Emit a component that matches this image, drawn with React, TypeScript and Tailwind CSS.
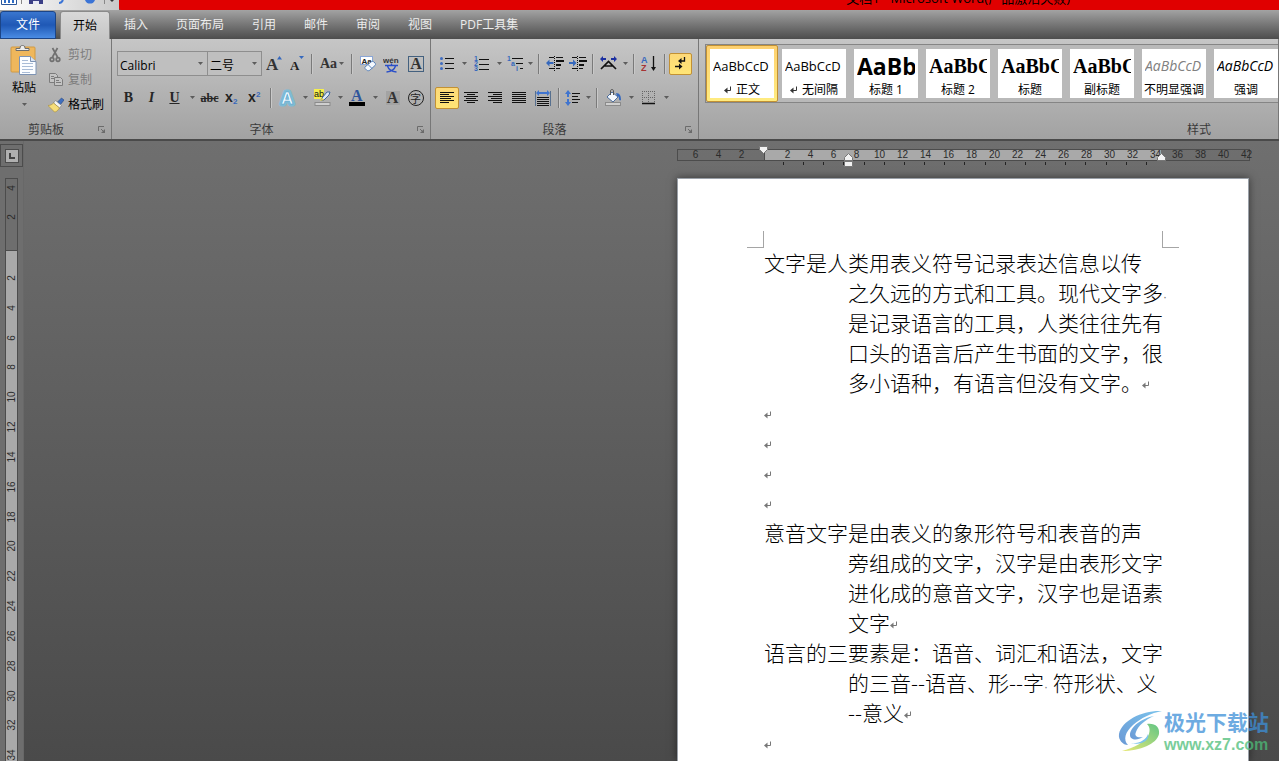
import type { ReactNode } from "react";
import clsx from "clsx";

const uiFont = "font-['Open_Sans','Noto_Sans_CJK_SC',sans-serif]";

const tabs = ["插入", "页面布局", "引用", "邮件", "审阅", "视图", "PDF工具集"];

const styleCards = [
  { label: "正文", mark: true, active: true, preview: "AaBbCcD", look: "text-[13px]" },
  { label: "无间隔", mark: true, preview: "AaBbCcD", look: "text-[13px]" },
  { label: "标题 1", preview: "AaBb", look: "text-[23px] font-bold" },
  { label: "标题 2", preview: "AaBbC", look: "text-xl font-bold font-['Liberation_Serif',serif]" },
  { label: "标题", preview: "AaBbC", look: "text-xl font-bold font-['Liberation_Serif',serif]" },
  { label: "副标题", preview: "AaBbC", look: "text-xl font-bold font-['Liberation_Serif',serif]" },
  { label: "不明显强调", preview: "AaBbCcD", look: "text-sm italic text-[#808080]" },
  { label: "强调", preview: "AaBbCcD", look: "text-sm italic" },
];

const paragraphs = [
  [
    "文字是人类用表义符号记录表达信息以传",
    "之久远的方式和工具。现代文字多·",
    "是记录语言的工具，人类往往先有",
    "口头的语言后产生书面的文字，很",
    "多小语种，有语言但没有文字。",
  ],
  [""],
  [""],
  [""],
  [""],
  [
    "意音文字是由表义的象形符号和表音的声",
    "旁组成的文字，汉字是由表形文字",
    "进化成的意音文字，汉字也是语素",
    "文字",
  ],
  ["语言的三要素是：语音、词汇和语法，文字", "的三音--语音、形--字· 符形状、义", "--意义"],
  [""],
];

const evens = (from: number, to: number) => {
  const list: number[] = [];
  for (let n = from; n <= to; n += 2) list.push(n);
  return list;
};

function ReturnMark({ className = "" }: { className?: string }) {
  return (
    <svg width="8" height="8" viewBox="0 0 8 8" className={clsx("inline-block shrink-0", className)} fill="none" stroke="currentColor">
      <path d="M6.5 0.5v4H1" />
      <path d="M3.5 1.5v6L0 4.5z" fill="currentColor" stroke="none" />
    </svg>
  );
}

function Caret() {
  return (
    <svg width="5" height="3" viewBox="0 0 5 3" className="shrink-0">
      <path d="M0 0h5L2.5 3z" fill="#5c5c5c" />
    </svg>
  );
}

function Tool({
  label,
  active,
  className = "w-[23px]",
  children,
}: {
  label: string;
  active?: boolean;
  className?: string;
  children: ReactNode;
}) {
  return (
    <button
      aria-label={label}
      title={label}
      className={clsx(
        "flex h-[22px] shrink-0 items-center justify-center rounded-[2px] text-[#262626]",
        active && "border border-[#c29134] bg-linear-to-b from-[#fdd978] to-[#ffe575]",
        className
      )}
    >
      {children}
    </button>
  );
}

function Drop({ label, className = "w-3" }: { label: string; className?: string }) {
  return (
    <button aria-label={label} className={clsx("flex h-[22px] shrink-0 items-center justify-center", className)}>
      <Caret />
    </button>
  );
}

function Sep() {
  return <span className="mx-[3px] h-5 w-[2px] shrink-0 border-r border-l border-r-[#c9c9c9] border-l-[#7a7a7a]" />;
}

function Group({
  label,
  className = "",
  launcher,
  footer = "justify-center pr-6",
  children,
}: {
  label: string;
  className?: string;
  launcher?: boolean;
  footer?: string;
  children: ReactNode;
}) {
  return (
    <section className={clsx("flex flex-col border-r border-[#777]", className)}>
      <div className="flex-1">{children}</div>
      <footer className={clsx("relative flex h-[19px] items-center text-xs text-[#3a3a3a]", footer)}>
        {label}
        {launcher && (
          <button aria-label={label + "选项"} className="absolute right-1.5 bottom-1.5">
            <svg width="7" height="7" viewBox="0 0 7 7" fill="none" stroke="#6b6b6b">
              <path d="M0.5 5V0.5H6M3 3l2.5 2.5" />
              <path d="M7 3v4H3z" fill="#6b6b6b" stroke="none" />
            </svg>
          </button>
        )}
      </footer>
    </section>
  );
}

function Combo({ label, value, className }: { label: string; value: string; className: string }) {
  return (
    <div className={clsx("relative h-[25px] border border-[#8e8e8e] bg-[#bfbfbf]", className)}>
      <select aria-label={label} className="h-full w-full appearance-none pb-1 pl-0.5 text-xs text-black">
        <option>{value}</option>
      </select>
      <span className="pointer-events-none absolute top-2.5 right-1 flex">
        <Caret />
      </span>
    </div>
  );
}

// rows of [x1, x2] text strokes, two pixels apart
function Lines({ rows }: { rows: number[][] }) {
  return (
    <svg width="16" height="13" viewBox="0 0 16 13" shapeRendering="crispEdges">
      {rows.map(([a, b], i) => (
        <path key={i} d={`M${a} ${i * 2 + 1.5}H${b}`} stroke="#111" />
      ))}
    </svg>
  );
}

function Indent({ flip }: { flip?: boolean }) {
  return (
    <svg width="18" height="15" viewBox="0 0 18 15" shapeRendering="crispEdges">
      <path d="M3 1.5h5M10 1.5h7M3 12.5h5M10 12.5h4" stroke="#111" />
      <path d="M10 5h8M10 9h5" stroke="#111" strokeWidth="2" />
      <path d="M8.5 0v15" stroke="#111" strokeDasharray="1 1" />
      <path
        d={flip ? "M7.500 7L4 3.500V6H0v2h4v2.500z" : "M0 7l3.500-3.500V6H7.500v2h-4v2.500z"}
        fill="#3568bd"
        shapeRendering="auto"
      />
    </svg>
  );
}

function ClipboardGroup() {
  return (
    <Group label="剪贴板" launcher className="w-[112px] shrink-0" footer="pl-7">
      <div className="flex">
        <button className="flex w-12 flex-col items-center pt-1.5 text-xs text-black">
          <svg width="28" height="31" viewBox="0 0 28 31">
            <rect x="1" y="2" width="24" height="25" rx="1" fill="#efb75c" stroke="#d19a43" />
            <path d="M6 5.500V3.500h4C10 1 11 .5 12.500.5S15 1 15 3.500h4v2z" fill="#eee" stroke="#6d6d6d" />
            <path d="M9.500 11.500h11l5.500 5v13H9.500z" fill="#fbfdff" stroke="#7d93b3" />
            <path d="M20.500 11.500v5H26" fill="#dbe6f4" stroke="#7d93b3" />
            <path d="M12 15.500h6M12 18.500h11M12 21.500h11M12 24.500h11M12 27.500h8" stroke="#a9bcd6" />
          </svg>
          <span className="mt-1 leading-4">粘贴</span>
          <span className="flex h-4 items-center">
            <Caret />
          </span>
        </button>
        <div className="flex flex-col pt-[3px] text-xs">
          <button className="flex h-[25px] items-center gap-1 text-[#7c7c7c]">
            <svg width="16" height="16" viewBox="0 0 16 16" fill="none" stroke="#707070" strokeWidth="1.700">
              <path d="M4.500 1l5 9M9.500 1l-5 9" />
              <circle cx="4" cy="12.500" r="1.800" />
              <circle cx="10" cy="12.500" r="1.800" />
            </svg>
            剪切
          </button>
          <button className="flex h-[25px] items-center gap-1 text-[#7c7c7c]">
            <svg width="16" height="16" viewBox="0 0 16 16" fill="#c4c4c4" stroke="#7c7c7c">
              <path d="M1.500 1.500h6l2 2v7h-8z" />
              <path d="M6.500 5.500h6l2 2v6h-8z" />
              <path d="M3 4.500h3M3 6.500h3M8 8.500h3M8 10.500h5" />
            </svg>
            复制
          </button>
          <button className="flex h-[25px] items-center gap-1 text-black">
            <svg width="16" height="16" viewBox="0 0 16 16">
              <path d="M9.500 5l4-4 2.500 2-3.500 4.500z" fill="#3f6fbf" stroke="#27477f" strokeWidth=".6" />
              <path d="M7.500 3.500l6 5-2 2.500-6-5z" fill="#f3f3f3" stroke="#777" strokeWidth=".6" />
              <path d="M5.500 6l6 5c-2 3-3.500 4-5 4L0 8.500c2.500 0 4-1 5.500-2.500z" fill="#f6dd79" stroke="#a58a35" strokeWidth=".6" />
            </svg>
            格式刷
          </button>
        </div>
      </div>
    </Group>
  );
}

function FontGroup() {
  return (
    <Group label="字体" launcher className="w-[319px] shrink-0 pl-[5px]">
      <div className="mt-3 flex h-[25px] items-center">
        <Combo label="字体" value="Calibri" className="w-[91px]" />
        <Combo label="字号" value="二号" className="-ml-px w-[55px]" />
        <Tool label="增大字体">
          <svg width="16" height="20" viewBox="0 0 16 20">
            <text x="0" y="16" fontSize="17" fontWeight="bold" fontFamily="Liberation Serif" fill="#333">A</text>
            <path d="M11 5.500h5L13.500 2z" fill="#3568bd" />
          </svg>
        </Tool>
        <Tool label="缩小字体">
          <svg width="14" height="20" viewBox="0 0 14 20">
            <text x="0" y="16" fontSize="13" fontWeight="bold" fontFamily="Liberation Serif" fill="#222">A</text>
            <path d="M9 2h5l-2.500 3z" fill="#3568bd" />
          </svg>
        </Tool>
        <Sep />
        <Tool label="更改大小写" className="w-8 gap-0.5">
          <span className="font-['Liberation_Serif',serif] text-sm font-bold text-[#333]">Aa</span>
          <Caret />
        </Tool>
        <Sep />
        <Tool label="清除格式" className="w-6">
          <svg width="17" height="18" viewBox="0 0 17 18">
            <rect x="0.500" y="1.500" width="12" height="8" fill="#fff" stroke="#8aa6d6" />
            <text x="1.500" y="8.500" fontSize="8" fontWeight="bold" fontFamily="Liberation Sans" fill="#222">Aa</text>
            <path d="M5 12l6-5c1-.8 2-.8 3 0l1 1c.8 1 .6 2 0 2.500l-5 4.500c-1 1-2.500 1-3.500 0l-1-1c-.8-.8-.8-1.500-.5-2z" fill="#f4f8fd" stroke="#5b84bb" />
            <path d="M8 9.500l4 4" stroke="#5b84bb" />
          </svg>
        </Tool>
        <Tool label="拼音指南" className="w-6">
          <svg width="18" height="18" viewBox="0 0 18 18">
            <text x="0" y="8" fontSize="8" fontFamily="Liberation Sans" fontWeight="bold" fill="#333">wén</text>
            <path d="M2 10.500h13M8.500 8.500v2M4.500 11c1 3.500 4 5.500 9 6M12.500 11c-1 3.500-4 5.500-9 6" fill="none" stroke="#2b50c8" strokeWidth="1.400" />
          </svg>
        </Tool>
        <Tool label="字符边框" className="w-6">
          <span className="flex h-4 w-4 items-center justify-center border border-[#44617f] font-['Liberation_Serif',serif] text-base leading-4 font-bold text-[#333]">
            A
          </span>
        </Tool>
      </div>
      <div className="mt-[9px] flex h-[25px] items-center font-['Liberation_Serif',serif]">
        <Tool label="加粗">
          <b className="text-sm">B</b>
        </Tool>
        <Tool label="倾斜">
          <b className="text-sm italic">I</b>
        </Tool>
        <Tool label="下划线">
          <b className="text-sm underline">U</b>
        </Tool>
        <Drop label="下划线样式" />
        <Tool label="删除线">
          <b className="text-xs line-through">abc</b>
        </Tool>
        <Tool label="下标">
          <svg width="15" height="18" viewBox="0 0 15 18">
            <text x="0" y="13" fontSize="14" fontWeight="bold" fontFamily="Liberation Sans" fill="#222">x</text>
            <text x="8" y="15" fontSize="8" fontWeight="bold" fontFamily="Liberation Sans" fill="#3568bd">2</text>
          </svg>
        </Tool>
        <Tool label="上标">
          <svg width="15" height="18" viewBox="0 0 15 18">
            <text x="0" y="13" fontSize="14" fontWeight="bold" fontFamily="Liberation Sans" fill="#222">x</text>
            <text x="8" y="8" fontSize="8" fontWeight="bold" fontFamily="Liberation Sans" fill="#3568bd">2</text>
          </svg>
        </Tool>
        <Sep />
        <Tool label="文本效果" className="w-6">
          <svg width="20" height="20" viewBox="0 0 20 20" fontFamily="Liberation Sans" fontSize="17" fontWeight="bold">
            <text x="4" y="16" fill="none" stroke="#6cc0e4" strokeWidth="5" strokeLinejoin="round" opacity=".7">A</text>
            <text x="4" y="16" fill="#f4fbff" stroke="#4ea3cf" strokeWidth=".6">A</text>
          </svg>
        </Tool>
        <Drop label="文本效果选项" />
        <Tool label="突出显示">
          <svg width="18" height="18" viewBox="0 0 18 18">
            <rect x="0" y="0" width="10" height="10" fill="#f5ef4d" />
            <text x="0" y="8" fontSize="9" fontFamily="Liberation Sans" fill="#111">ab</text>
            <path d="M8 9l5-6 3 0-1 3-5 5-2.500.5z" fill="#dce8f6" stroke="#43689e" />
            <path d="M6 12l2-3 2 2z" fill="#e8d13f" />
            <rect x="1" y="13.500" width="15" height="3" fill="#cfcfcf" stroke="#8b8b8b" />
          </svg>
        </Tool>
        <Drop label="突出显示颜色" />
        <Tool label="字体颜色">
          <svg width="17" height="20" viewBox="0 0 17 20">
            <text x="2" y="13" fontSize="16" fontWeight="bold" fontFamily="Liberation Serif" fill="#2f559c">A</text>
            <rect x="0" y="14" width="16" height="4" fill="#000" />
          </svg>
        </Tool>
        <Drop label="选择字体颜色" />
        <Tool label="字符底纹">
          <span className="flex h-[14px] w-[14px] items-center justify-center bg-[#a3a3a3] text-base leading-[14px] font-bold text-[#333]">A</span>
        </Tool>
        <Tool label="带圈字符">
          <span className="flex h-4 w-4 shrink-0 items-center justify-center rounded-full border border-[#222] font-['Noto_Sans_CJK_SC',sans-serif] text-[11px] leading-3">
            字
          </span>
        </Tool>
      </div>
    </Group>
  );
}

function ParagraphGroup() {
  return (
    <Group label="段落" launcher className="w-[268px] shrink-0 pl-1">
      <div className="mt-3 flex h-[25px] items-center">
        <Tool label="项目符号">
          <svg width="14" height="15" viewBox="0 0 14 15">
            <path d="M5 2.500h9M5 7.500h9M5 12.500h9" stroke="#111" />
            <g fill="#3f6cc0">
              <circle cx="1.500" cy="2.500" r="1.500" />
              <circle cx="1.500" cy="7.500" r="1.500" />
              <circle cx="1.500" cy="12.500" r="1.500" />
            </g>
          </svg>
        </Tool>
        <Drop label="项目符号库" />
        <Tool label="编号">
          <svg width="15" height="18" viewBox="0 0 15 18" fontSize="7" fontWeight="bold" fontFamily="Liberation Sans" fill="#3568bd">
            <path d="M5 4.500h10M5 9.500h10M5 14.500h10" stroke="#111" />
            <text x="0" y="6">1</text>
            <text x="0" y="11">2</text>
            <text x="0" y="16">3</text>
          </svg>
        </Tool>
        <Drop label="编号库" />
        <Tool label="多级列表" className="w-5">
          <svg width="17" height="18" viewBox="0 0 17 18" fontSize="7" fontWeight="bold" fontFamily="Liberation Sans" fill="#3568bd">
            <path d="M5 3.500h11M9 8.500h7M13 13.500h3" stroke="#111" />
            <text x="0" y="6">1</text>
            <text x="4" y="11">a</text>
            <text x="9" y="16">i</text>
          </svg>
        </Tool>
        <Drop label="多级列表库" className="w-2.5" />
        <Sep />
        <Tool label="减少缩进量">
          <Indent />
        </Tool>
        <Tool label="增加缩进量">
          <Indent flip />
        </Tool>
        <Sep />
        <Tool label="中文版式">
          <svg width="17" height="15" viewBox="0 0 17 15">
            <path d="M1 13L8.500 5.500 16 13M4.500 10h8" fill="none" stroke="#111" strokeWidth="1.700" />
            <path d="M0 3l3-3v2h3v2H3v2zM17 3l-3-3v2h-3v2h3v2z" fill="#1b2fa0" />
          </svg>
        </Tool>
        <Drop label="中文版式选项" className="w-2.5" />
        <Sep />
        <Tool label="排序">
          <svg width="17" height="20" viewBox="0 0 17 20" fontSize="9" fontWeight="bold" fontFamily="Liberation Sans">
            <text x="0" y="9" fill="#3568bd">A</text>
            <text x="0" y="17" fill="#a63333">Z</text>
            <path d="M12.500 2v12" stroke="#111" strokeWidth="1.300" />
            <path d="M10 13h5l-2.500 4z" fill="#111" />
          </svg>
        </Tool>
        <Sep />
        <Tool label="显示编辑标记" active>
          <svg width="13" height="15" viewBox="0 0 13 15" fill="none" stroke="#111">
            <path d="M10.500 1v4H6M1 10.500h5" strokeWidth="1.300" />
            <path d="M7.500 2v6L4 5zM5 7.500v6l3.500-3z" fill="#111" stroke="none" />
          </svg>
        </Tool>
      </div>
      <div className="mt-[9px] flex h-[25px] items-center">
        <Tool label="左对齐" active className="w-6">
          <Lines rows={[[1, 15], [1, 10], [1, 15], [1, 12], [1, 15], [1, 10]]} />
        </Tool>
        <Tool label="居中" className="w-6">
          <Lines rows={[[1, 15], [4, 12], [1, 15], [3, 13], [1, 15], [4, 12]]} />
        </Tool>
        <Tool label="右对齐" className="w-6">
          <Lines rows={[[1, 15], [6, 15], [1, 15], [4, 15], [1, 15], [6, 15]]} />
        </Tool>
        <Tool label="两端对齐" className="w-6">
          <Lines rows={[[1, 15], [1, 15], [1, 15], [1, 15], [1, 15], [1, 15]]} />
        </Tool>
        <Tool label="分散对齐" className="w-6">
          <svg width="16" height="16" viewBox="0 0 16 16">
            <path d="M.5 1v15M15.500 1v15" stroke="#57708f" />
            <path d="M2 7.500h12M2 9.500h12M2 11.500h12M2 13.500h12M2 15.500h12" stroke="#111" />
            <path d="M1 3l3-3v2h8V0l3 3-3 3V4H4v2z" fill="#3f74cf" />
          </svg>
        </Tool>
        <Sep />
        <Tool label="行距" className="w-5">
          <svg width="16" height="16" viewBox="0 0 16 16">
            <path d="M7 3.500h8M7 6.500h6M7 9.500h8M7 12.500h6" stroke="#111" />
            <path d="M3 0l3 4H4v3H2V4H0zM3 16l3-4H4V9H2v3H0z" fill="#3f74cf" />
          </svg>
        </Tool>
        <Drop label="行距选项" className="w-2.5" />
        <Sep />
        <Tool label="底纹" className="w-6">
          <svg width="17" height="17" viewBox="0 0 17 17">
            <path d="M7 3l6 5-5 5-6-5z" fill="#f4f8fd" stroke="#4d6d9c" />
            <path d="M5.500 6V2c0-2 3-2 3 0v4" fill="none" stroke="#555" />
            <path d="M11 4c4 0 5 3 5 7-1 1-2 0-2-1 0-2-.5-3-2-3z" fill="#3568bd" />
            <rect x="0.500" y="13.500" width="15" height="3" fill="#cfcfcf" stroke="#8b8b8b" />
          </svg>
        </Tool>
        <Drop label="底纹颜色" />
        <Tool label="边框">
          <svg width="14" height="14" viewBox="0 0 14 14" fill="none">
            <path d="M.5 0v13M6.500 0v13M12.500 0v13M0 .5h13M0 6.500h13" stroke="#666" strokeDasharray="1 1" />
            <path d="M0 12.500h13" stroke="#111" strokeWidth="1.500" />
          </svg>
        </Tool>
        <Drop label="边框选项" />
      </div>
    </Group>
  );
}

function StylesGroup() {
  return (
    <Group label="样式" className="min-w-0 flex-1 overflow-hidden pl-1.5" footer="justify-end pr-[67px]">
      <div className="mt-[5px] flex border border-r-0 border-[#858585] bg-[#b9b9b9]">
        {styleCards.map((card) => (
          <button
            key={card.label}
            className={clsx(
              "h-[57px] w-[72px] shrink-0 rounded-[2px] border p-[3px]",
              card.active ? "border-[#c29134] bg-linear-to-b from-[#fdd070] to-[#ffec80]" : "border-transparent"
            )}
          >
            <span className="flex h-full flex-col overflow-hidden bg-white px-[3px] text-black">
              <span className={clsx("flex h-[33px] shrink-0 items-center overflow-hidden leading-8", card.look)}>{card.preview}</span>
              <span className="-mx-[3px] flex h-4 shrink-0 items-center justify-center gap-1 text-xs leading-4 whitespace-nowrap">
                {card.mark && <ReturnMark className="text-[#333]" />}
                {card.label}
              </span>
            </span>
          </button>
        ))}
      </div>
    </Group>
  );
}

function QuickAccess() {
  return (
    <div className="w-[119px] shrink-0 bg-linear-to-r from-white to-[#c9c9c9]">
      <svg width="119" height="10" viewBox="0 0 119 10">
        <path d="M1.500 0v4.500h15V0" fill="#fff" stroke="#2b579a" />
        <path d="M5 0v3M9 0v3M13 0v3" stroke="#2f6cc4" strokeWidth="2" />
        <path d="M21.500 0v4M104.500 0v4" stroke="#888" />
        <path d="M29 0h14v4H29z" fill="#3b3f86" />
        <path d="M33 1h6v3h-6z" fill="#e6e8f5" />
        <path d="M63 0c-1 2-2 3-4 3" fill="none" stroke="#3b74d6" strokeWidth="2" />
        <path d="M85 0c1 3 3 3.500 5 3.500S94 3 95 0z" fill="#3b74d6" />
        <path d="M110 0h4l-2 2z" fill="#333" />
      </svg>
    </div>
  );
}

function RulerCells({ values }: { values: number[] }) {
  return (
    <>
      {values.map((n) => (
        <span key={n} className="w-[23px] shrink-0 text-center">
          {n}
        </span>
      ))}
    </>
  );
}

function HorizontalRuler() {
  return (
    <div className="relative -mr-px font-['Liberation_Sans',sans-serif] text-[10px] leading-[10px] text-[#2b2b2b]">
      <div className="flex h-3 border border-[#4c4c4c]">
        <div className="flex w-[87px] shrink-0 border-r border-[#4c4c4c] pl-1.5">
          <RulerCells values={[6, 4, 2]} />
        </div>
        <div className="flex w-[396px] shrink-0 bg-[#a9a9a9] pl-[11px]">
          <RulerCells values={evens(2, 34)} />
        </div>
        <div className="flex min-w-0 flex-1 pl-[5px]">
          <RulerCells values={evens(36, 42)} />
        </div>
      </div>
      <div className="mt-px ml-[106px] flex w-[364px] justify-between">
        {Array.from({ length: 19 }, (_, i) => (
          <span key={i} className="h-[3px] w-px bg-[#222]" />
        ))}
      </div>
      {/* indent handles */}
      <svg width="9" height="8" viewBox="0 0 9 8" className="absolute -top-[3px] left-[82px]">
        <path d="M.5.5h8v3l-4 4-4-4z" fill="#f2f2f2" stroke="#777" />
      </svg>
      <svg width="9" height="14" viewBox="0 0 9 14" className="absolute top-1 left-[167px]">
        <path d="M.5 7.500v-3l4-4 4 4v3zM.5 8.500h8v5h-8z" fill="#f2f2f2" stroke="#777" />
      </svg>
      <svg width="9" height="8" viewBox="0 0 9 8" className="absolute top-1 left-[480px]">
        <path d="M.5 7.500v-3l4-4 4 4v3z" fill="#f2f2f2" stroke="#777" />
      </svg>
    </div>
  );
}

function VerticalRuler() {
  return (
    <aside className="w-6 shrink-0 overflow-hidden border-r border-[#686868] bg-[#6e6e6e] font-['Liberation_Sans',sans-serif] text-[10px] leading-[10px] text-[#2b2b2b]">
      <button aria-label="制表符" className="mt-[3px] flex h-[23px] w-full items-center justify-center border border-[#4c4c4c]">
        <span className="flex h-[14px] w-[14px] items-center justify-center border border-[#4c4c4c] bg-[#b0b0b0]">
          <span className="h-1.5 w-1.5 border-b-2 border-l-2 border-[#444]" />
        </span>
      </button>
      <div className="mt-[11px] ml-[5px] h-[583px] w-[13px] border border-b-0 border-[#4c4c4c]">
        <div className="flex h-[72px] flex-col border-b border-[#4c4c4c]">
          {[4, 2].map((n, i) => (
            <span key={n} className={clsx("flex items-center justify-center", i ? "h-10" : "h-[18px]")}>
              <span className="-rotate-90">{n}</span>
            </span>
          ))}
        </div>
        <div className="flex h-[519px] flex-col bg-[#a9a9a9] pt-3">
          {evens(2, 34).map((n) => (
            <span key={n} className="flex flex-1 items-center justify-center">
              <span className="-rotate-90">{n}</span>
            </span>
          ))}
        </div>
      </div>
    </aside>
  );
}

function Page() {
  return (
    <article className="flex-1 border border-b-0 border-[#9aa0a8] bg-white shadow-[0_0_8px_rgba(0,0,0,0.5)]">
      <div className="flex justify-between px-[69px] pt-[52px]">
        <span className="h-[17px] w-[17px] border-r border-b border-[#a5a5a5]" />
        <span className="h-[17px] w-[17px] border-b border-l border-[#a5a5a5]" />
      </div>
      <div className="-mt-px pl-[86px] font-['Noto_Sans_CJK_SC',sans-serif] text-[21px] leading-[30px] font-light whitespace-nowrap text-black">
        {paragraphs.map((lines, p) => (
          <p key={p} className="pl-21 -indent-21">
            {lines.map((line, i) => (
              <span key={i}>
                {i > 0 && <br />}
                {line.split("·").map((part, k) => (
                  <span key={k}>
                    {k > 0 && <span className="font-['Liberation_Sans',sans-serif] text-xs text-[#777]">·</span>}
                    {part}
                  </span>
                ))}
                {i === lines.length - 1 && <ReturnMark className="text-[#777]" />}
              </span>
            ))}
          </p>
        ))}
      </div>
    </article>
  );
}

function Watermark() {
  return (
    <div className="absolute right-2.5 bottom-1.5 flex items-center opacity-75">
      <svg width="46" height="42" viewBox="0 0 46 42" fill="none">
        <defs>
          <linearGradient id="swirlBlue" x1="0" y1="1" x2="1" y2="0">
            <stop offset="0" stopColor="#3a78c8" />
            <stop offset="1" stopColor="#4fb0e6" />
          </linearGradient>
          <linearGradient id="swirlGreen" x1="0" y1="1" x2="1" y2="0">
            <stop offset="0" stopColor="#e3e24a" />
            <stop offset="1" stopColor="#2fb35c" />
          </linearGradient>
        </defs>
        <path d="M44 1C25 0 4 10 1 24c-1 6 4 11 9 11-5-5-3-13 5-20C23 8 33 3 44 1z" fill="url(#swirlBlue)" />
        <path d="M36 6C24 8 12 17 12 25c0 5 7 6 13 2-6 1-9-1-7-5 2-6 9-12 18-16z" fill="url(#swirlBlue)" />
        <path d="M29 14c8-1 13 3 12 10C39 34 22 41 4 41c11-3 24-9 27-17 1-4 1-7-2-10z" fill="url(#swirlGreen)" />
        <path d="M13 33c8 1 15-3 17-9 2 5-5 12-17 9z" fill="#4fb0e6" />
      </svg>
      <div className="flex flex-col">
        <span className="font-['Noto_Sans_CJK_SC',sans-serif] text-[21px] leading-7 font-bold text-[#3d8fd8]">极光下载站</span>
        <span className="font-['Liberation_Sans',sans-serif] text-base leading-5 font-bold text-[#4dbd78]">www.xz7.com</span>
      </div>
    </div>
  );
}

export default function App() {
  return (
    <div className={clsx("relative flex min-h-screen flex-col overflow-hidden", uiFont)}>
      <header className="flex h-2.5 overflow-hidden bg-[#5d5d5d]">
        <QuickAccess />
        <div className="flex flex-1 items-end justify-end rounded-bl-[2px] bg-[#e00000] pr-[209px] pb-1">
          <h1 className="text-[13px] leading-4 text-black">文档1 - Microsoft Word(产品激活失败)</h1>
        </div>
      </header>

      <nav className="flex h-[29px] items-end bg-linear-to-b from-[#a3a3a3] to-[#4d4d4d] text-xs text-[#ececec]">
        <button className="h-7 w-14 rounded-t-[3px] border border-[#1c4587] bg-linear-to-b from-[#3a76cf] via-[#1f58b5] to-[#4a8ce4] text-white">
          文件
        </button>
        <button className="ml-1 h-7 w-[50px] rounded-t-[3px] border border-b-0 border-[#8a8a8a] bg-linear-to-b from-[#d8d8d8] to-[#c6c6c6] text-black">
          开始
        </button>
        {tabs.map((tab) => (
          <button key={tab} className="h-7 px-[14px]">
            {tab}
          </button>
        ))}
      </nav>

      <div className="flex h-[102px] border-b-2 border-[#4a4a4a] bg-linear-to-b from-[#c6c6c6] to-[#a2a2a2]">
        <ClipboardGroup />
        <FontGroup />
        <ParagraphGroup />
        <StylesGroup />
      </div>

      <main className="flex flex-1 bg-linear-to-b from-[#6f6f6f] to-[#4a4a4a]">
        <VerticalRuler />
        <div className="mr-[30px] ml-auto flex w-[572px] flex-col gap-[13px] pt-2">
          <HorizontalRuler />
          <Page />
        </div>
      </main>
      <Watermark />
    </div>
  );
}
